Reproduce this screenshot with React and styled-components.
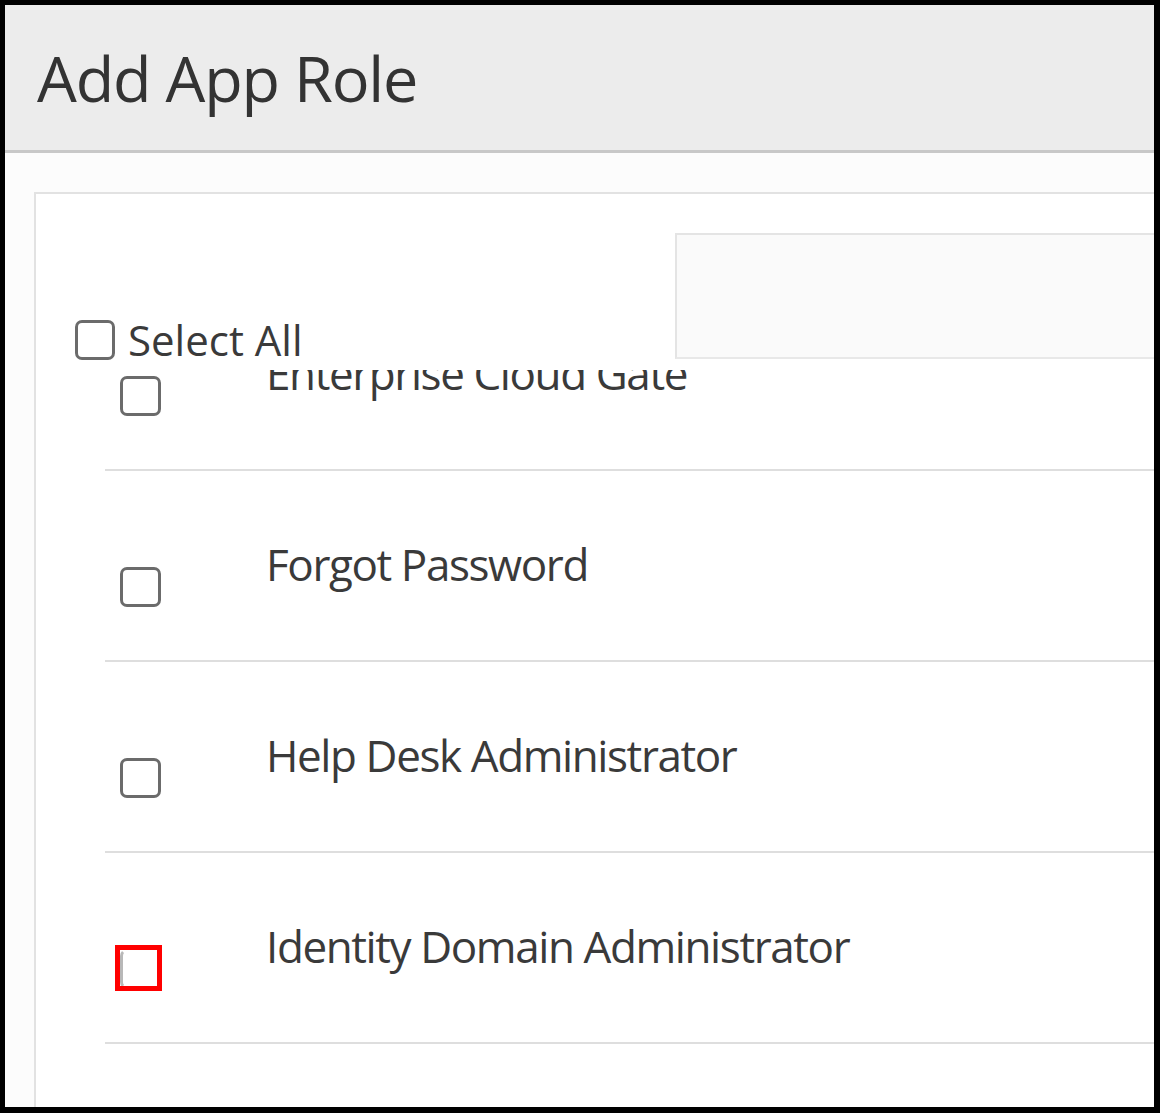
import React from "react";
import styled, { createGlobalStyle } from "styled-components";

const GlobalStyle = createGlobalStyle`
  html, body {
    margin: 0;
    padding: 0;
    background: #ffffff;
  }
  *, *::before, *::after {
    box-sizing: border-box;
  }
`;

const Frame = styled.div`
  width: 1160px;
  height: 1113px;
  border-style: solid;
  border-color: #000;
  border-width: 5px 6px 6px 5px;
  display: flex;
  flex-direction: column;
  overflow: hidden;
  font-family: "Open Sans", "Noto Sans", Arial, sans-serif;
  color: #3a3a3a;
`;

const Header = styled.div`
  height: 148px;
  flex-shrink: 0;
  background: #ececec;
  border-bottom: 3px solid #c8c8c8;
  padding-left: 32px;
  display: flex;
  align-items: center;
`;

const Title = styled.h1`
  margin: 0;
  font-size: 63px;
  font-weight: 400;
  color: #333;
  letter-spacing: -1.2px;
`;

const Body = styled.div`
  flex: 1;
  min-height: 0;
  background: #fcfcfc;
  padding: 39px 0 0 29px;
  display: flex;
`;

const Panel = styled.div`
  flex: 1;
  background: #fff;
  border-top: 2px solid #e2e2e2;
  border-left: 2px solid #e2e2e2;
  display: flex;
  flex-direction: column;
`;

const TopBar = styled.div`
  height: 176px;
  flex-shrink: 0;
  display: flex;
  align-items: flex-start;
  padding-left: 39px;
`;

const SelectAll = styled.label`
  display: flex;
  align-items: center;
  gap: 13px;
  margin-top: 126px;
  font-size: 42px;
  line-height: 40px;
  color: #3a3a3a;
`;

const Box = styled.span`
  position: relative;
  display: inline-block;
  width: ${(p) => p.$w || 41}px;
  height: 40px;
  flex-shrink: 0;
  border: 3px solid ${(p) => (p.$flagged ? "transparent" : "#6b6b6b")};
  border-left-color: ${(p) => (p.$flagged ? "#b8b8b8" : "#6b6b6b")};
  border-radius: 7px;
  background: #fff;

  ${(p) =>
    p.$flagged &&
    `
    &::after {
      content: "";
      position: absolute;
      left: -8px;
      top: -7px;
      width: 47px;
      height: 46px;
      border: 5px solid #ff0000;
    }
  `}
`;

const SearchField = styled.div`
  margin-left: auto;
  margin-top: 39px;
  width: 479px;
  height: 126px;
  background: #fafafa;
  border-top: 2px solid #e4e4e4;
  border-left: 2px solid #e4e4e4;
  border-bottom: 2px solid #e8e8e8;
`;

const ListViewport = styled.div`
  flex: 1;
  min-height: 0;
  overflow: hidden;
  padding-left: 69px;
`;

const List = styled.ul`
  list-style: none;
  margin: -90px 0 0 0;
  padding: 0;
`;

const Row = styled.li`
  height: 191px;
  border-bottom: 2px solid #dedede;
  display: grid;
  grid-template-columns: 41px 1fr;
  column-gap: 105px;
  align-items: start;
  padding-left: 15px;
`;

const RowBox = styled.div`
  margin-top: 96px;
`;

const RowText = styled.div`
  margin-top: 70px;
  font-size: 44px;
  line-height: 46px;
  color: #3a3a3a;
  letter-spacing: -1.4px;
  white-space: nowrap;
`;

const roles = [
  { name: "Enterprise Cloud Gate" },
  { name: "Forgot Password" },
  { name: "Help Desk Administrator" },
  { name: "Identity Domain Administrator", flagged: true },
];

const App = () => {
  return (
    <>
      <GlobalStyle />
      <Frame>
        <Header>
          <Title>Add App Role</Title>
        </Header>
        <Body>
          <Panel>
            <TopBar>
              <SelectAll>
                <Box $w={40} />
                Select All
              </SelectAll>
              <SearchField />
            </TopBar>
            <ListViewport>
              <List>
                {roles.map((role) => (
                  <Row key={role.name}>
                    <RowBox>
                      <Box $flagged={role.flagged} />
                    </RowBox>
                    <RowText>{role.name}</RowText>
                  </Row>
                ))}
              </List>
            </ListViewport>
          </Panel>
        </Body>
      </Frame>
    </>
  );
};

export default App;
